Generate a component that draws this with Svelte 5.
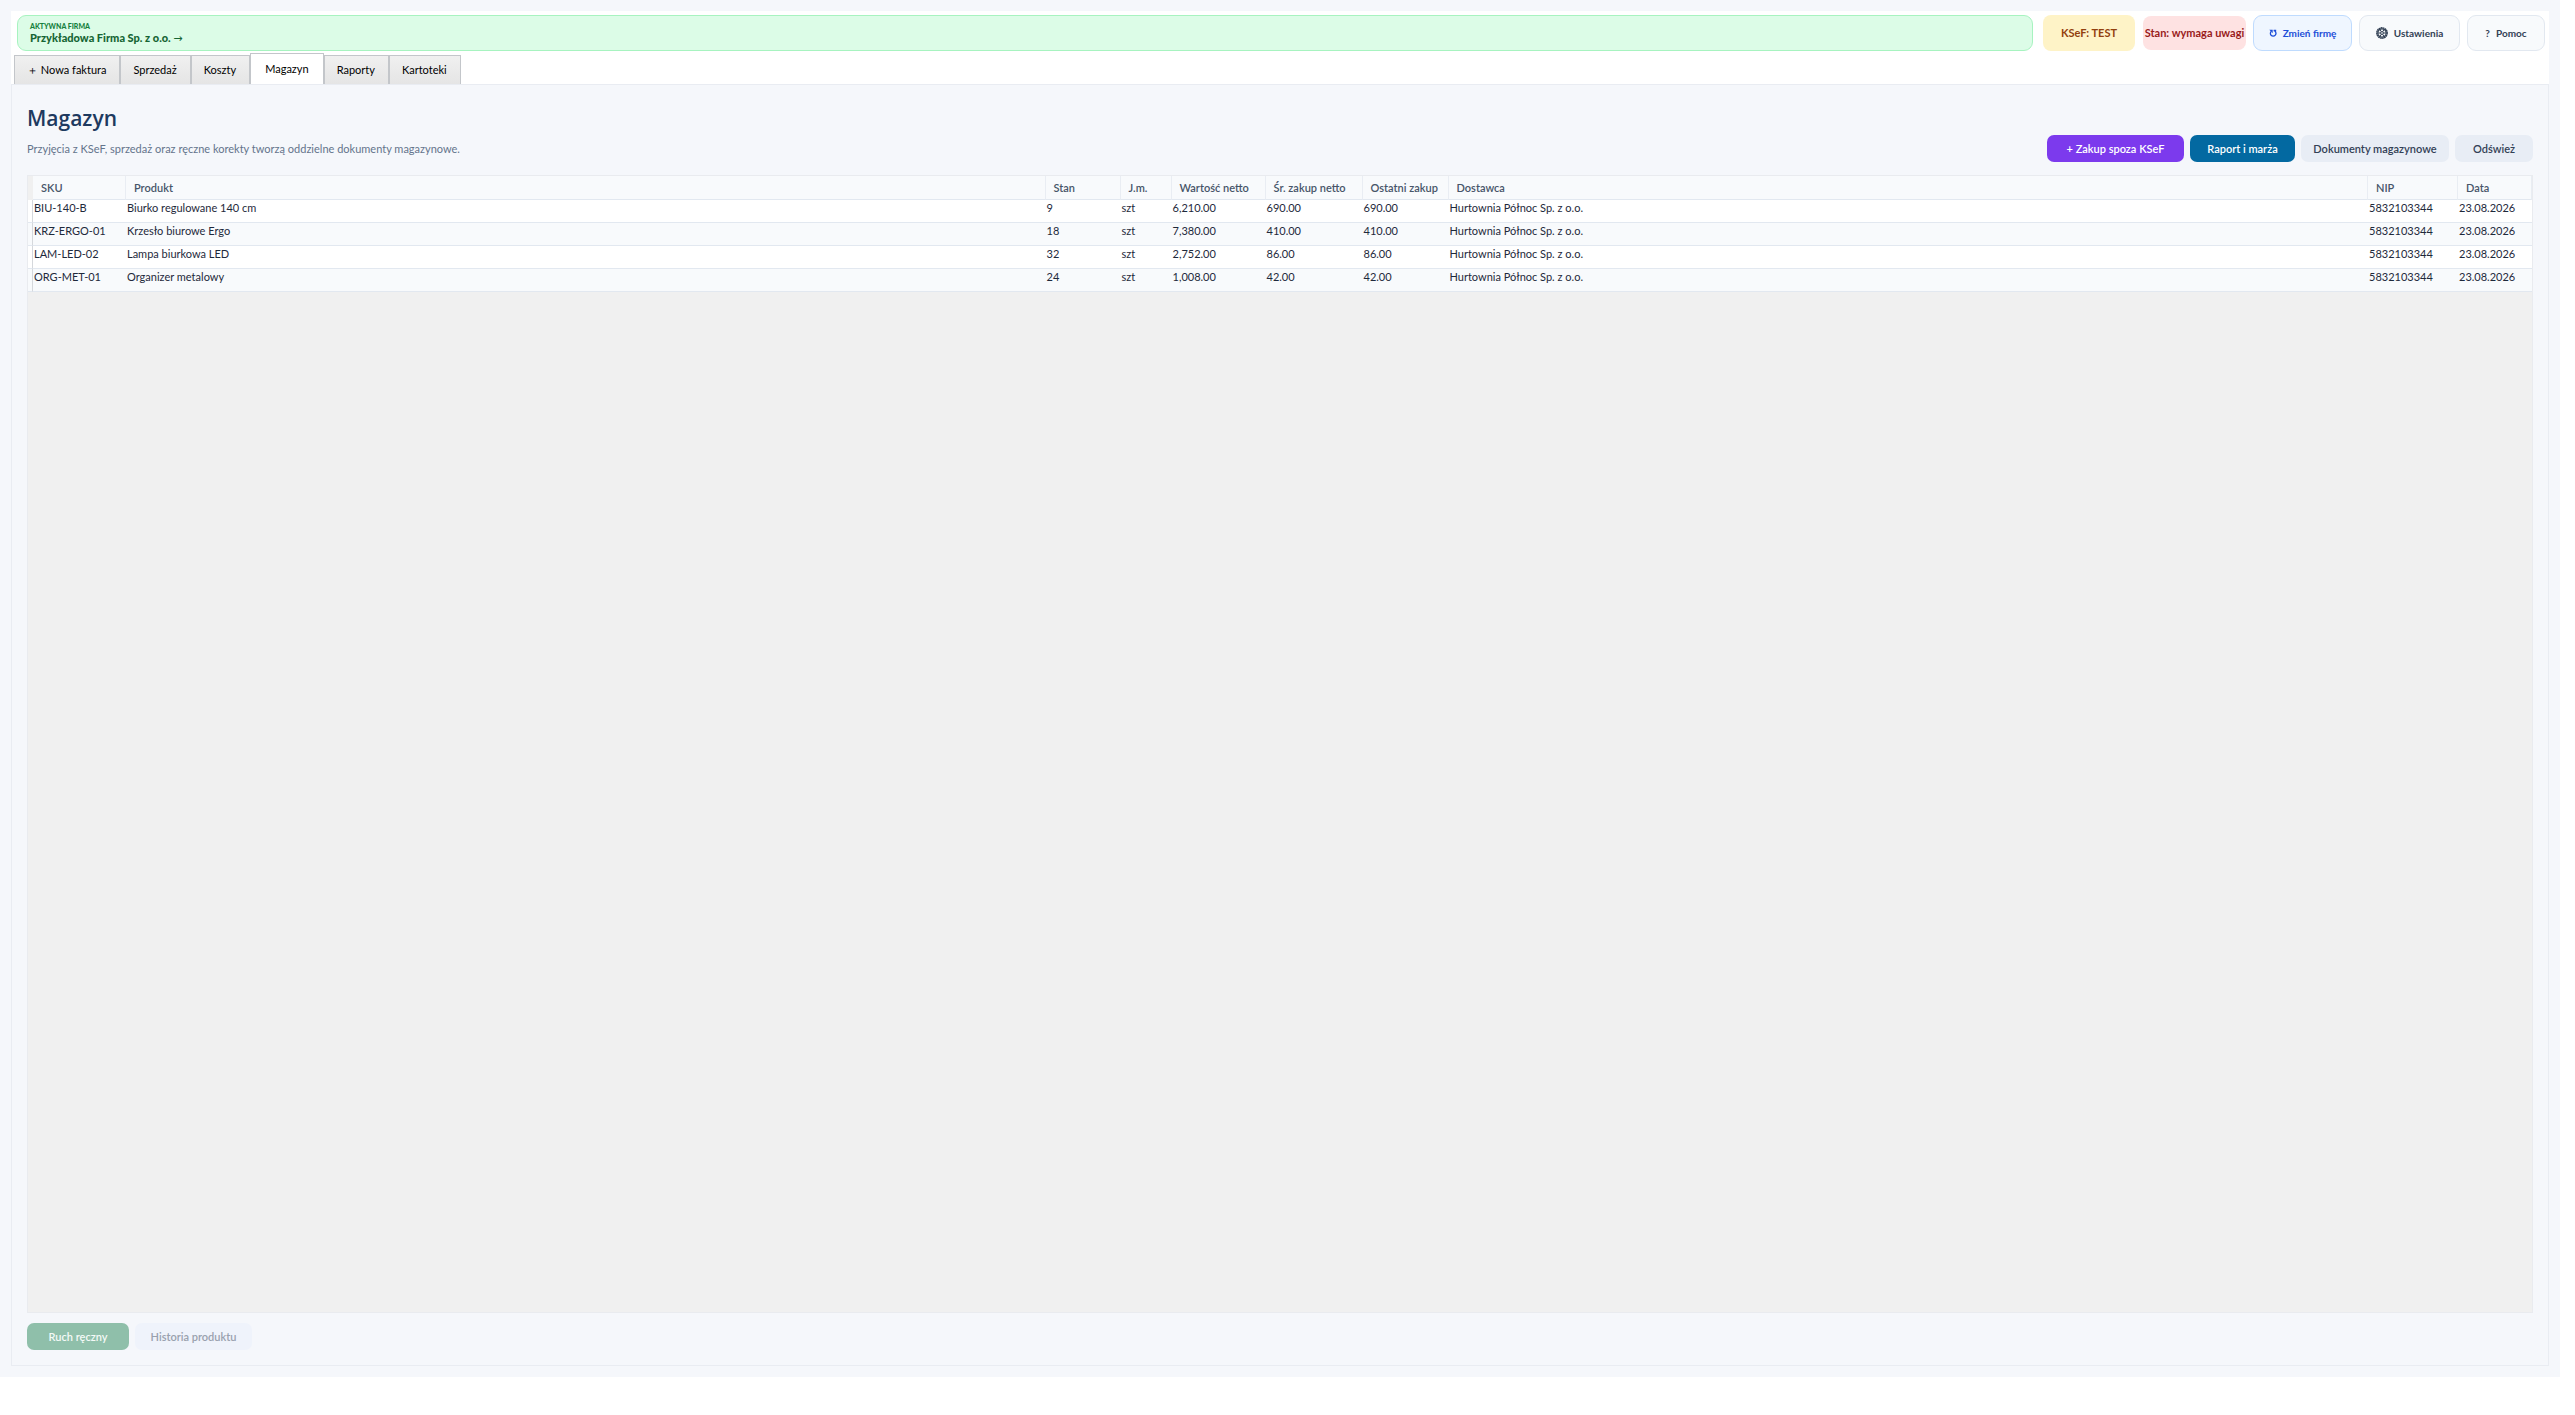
<script>
  const tabs = ['＋ Nowa faktura', 'Sprzedaż', 'Koszty', 'Magazyn', 'Raporty', 'Kartoteki'];
  let active = $state('Magazyn');

  const supplier = 'Hurtownia Północ Sp. z o.o.';
  const products = [
    { sku: 'BIU-140-B', name: 'Biurko regulowane 140 cm', stock: 9, value: '6,210.00', avg: '690.00', last: '690.00' },
    { sku: 'KRZ-ERGO-01', name: 'Krzesło biurowe Ergo', stock: 18, value: '7,380.00', avg: '410.00', last: '410.00' },
    { sku: 'LAM-LED-02', name: 'Lampa biurkowa LED', stock: 32, value: '2,752.00', avg: '86.00', last: '86.00' },
    { sku: 'ORG-MET-01', name: 'Organizer metalowy', stock: 24, value: '1,008.00', avg: '42.00', last: '42.00' }
  ];
</script>

<div class="window">
  <header>
    <div class="topbar">
      <button class="company">
        <small>AKTYWNA FIRMA</small>
        <strong>Przykładowa Firma Sp. z o.o. <span class="arrow">→</span></strong>
      </button>
      <span class="badge test">KSeF: TEST</span>
      <span class="badge state">Stan: wymaga uwagi</span>
      <button class="tool change">
        <svg width="8" height="8" viewBox="0 0 8 8" aria-hidden="true">
          <path d="M0.300 0.800h3.400v3.400z" fill="currentColor" />
          <path d="M2.200 2.600C1.200 3.500 1.100 5.200 2.100 6.200C3.200 7.300 5.100 7.300 6.200 6.200C7.200 5 7 3 5.600 1.700M4.600 1.500h2.600" fill="none" stroke="currentColor" stroke-width="1.300" />
        </svg>
        Zmień firmę
      </button>
      <button class="tool settings">
        <svg width="12" height="12" viewBox="0 0 12 12" aria-hidden="true">
          <circle cx="6" cy="6" r="5.200" fill="none" stroke="currentColor" stroke-width="1.400" stroke-dasharray="1.700 0.350" />
          <circle cx="6" cy="6" r="4.200" fill="none" stroke="currentColor" stroke-width="1.200" />
          <circle cx="6" cy="6" r="1.400" fill="none" stroke="currentColor" stroke-width="1" />
          <path d="M1.500 6h3M7.500 6h3M5.300 4.800L3.800 2.200M6.700 4.800l1.500-2.600M5.300 7.200l-1.500 2.600M6.700 7.200l1.500 2.600" stroke="currentColor" stroke-width="1" />
        </svg>
        Ustawienia
      </button>
      <button class="tool help"><span>?</span>Pomoc</button>
    </div>
    <nav>
      {#each tabs as tab}
        <button class:active={tab === active} onclick={() => (active = tab)}>{tab}</button>
      {/each}
    </nav>
  </header>

  <main>
    <h1>Magazyn</h1>
    <div class="intro">
      <p>Przyjęcia z KSeF, sprzedaż oraz ręczne korekty tworzą oddzielne dokumenty magazynowe.</p>
      <div class="actions">
        <button class="purchase">+ Zakup spoza KSeF</button>
        <button class="report">Raport i marża</button>
        <button class="documents">Dokumenty magazynowe</button>
        <button class="refresh">Odśwież</button>
      </div>
    </div>

    <div class="grid">
      <table>
        <colgroup>
          <col class="w-handle" /><col class="w-sku" /><col /><col class="w-stock" /><col class="w-unit" />
          <col class="w-value" /><col class="w-avg" /><col class="w-last" /><col /><col class="w-nip" /><col class="w-date" />
        </colgroup>
        <thead>
          <tr>
            <td class="handle"></td>
            <th>SKU</th>
            <th>Produkt</th>
            <th>Stan</th>
            <th>J.m.</th>
            <th>Wartość netto</th>
            <th>Śr. zakup netto</th>
            <th>Ostatni zakup</th>
            <th>Dostawca</th>
            <th>NIP</th>
            <th>Data</th>
          </tr>
        </thead>
        <tbody>
          {#each products as p}
            <tr>
              <td class="handle"></td>
              <td>{p.sku}</td>
              <td>{p.name}</td>
              <td>{p.stock}</td>
              <td>szt</td>
              <td>{p.value}</td>
              <td>{p.avg}</td>
              <td>{p.last}</td>
              <td>{supplier}</td>
              <td>5832103344</td>
              <td>23.08.2026</td>
            </tr>
          {/each}
        </tbody>
      </table>
    </div>

    <footer>
      <button class="move" disabled>Ruch ręczny</button>
      <button class="history" disabled>Historia produktu</button>
    </footer>
  </main>
</div>

<style>
  :global(body) {
    margin: 0;
    background: #fff;
  }

  .window {
    display: flex;
    flex-direction: column;
    box-sizing: border-box;
    min-height: calc(100vh - 38px);
    margin-right: 15px;
    padding: 11px;
    background: #f5f7fb;
    font-family: Lato, 'Open Sans', sans-serif;
    font-size: 11px;
    line-height: 16px;
    color: #1e293b;
  }

  button {
    font: inherit;
    margin: 0;
    padding: 0;
    border: 0;
    white-space: nowrap;
  }

  header {
    background: #fff;
  }

  .topbar {
    display: flex;
    gap: 7px;
    align-items: center;
    padding: 4px 4px 0 6px;
  }

  .company {
    flex: 1;
    display: flex;
    flex-direction: column;
    justify-content: center;
    box-sizing: border-box;
    height: 36px;
    margin-right: 3px;
    padding: 0 12px;
    border: 1px solid #a7f3c0;
    border-radius: 9px;
    background: #dcfce7;
    color: #166534;
    text-align: left;
  }

  .company small {
    font-size: 7px;
    line-height: 10px;
    font-weight: 900;
    color: #15803d;
  }

  .company strong {
    line-height: 14px;
    font-weight: 900;
  }

  .arrow {
    font-family: 'DejaVu Sans', sans-serif;
    font-weight: 400;
  }

  .badge {
    box-sizing: border-box;
    border-radius: 8px;
    font-weight: 700;
    line-height: 34px;
    text-align: center;
    white-space: nowrap;
  }

  .test {
    width: 92px;
    margin-right: 1px;
    padding: 1px 0;
    background: #fef3c7;
    color: #92400e;
  }

  .state {
    width: 103px;
    background: #fee2e2;
    color: #991b1b;
  }

  .tool {
    display: flex;
    gap: 6px;
    align-items: center;
    justify-content: center;
    box-sizing: border-box;
    height: 36px;
    border: 1px solid #e2e8f0;
    border-radius: 9px;
    background: #f8fafc;
    color: #334155;
    font-size: 10px;
    font-weight: 700;
  }

  .change {
    width: 99px;
    border-color: #bfdbfe;
    background: #eff6ff;
    color: #1d4ed8;
  }

  .settings {
    width: 101px;
  }

  .help {
    width: 78px;
  }

  nav {
    display: flex;
    align-items: flex-end;
    height: 33px;
    padding-left: 3px;
  }

  nav button {
    box-sizing: border-box;
    height: 29px;
    padding: 0 13px 0 12px;
    border: 1px solid #c3c6ca;
    border-bottom: 0;
    background: linear-gradient(#f0f0f0, #e5e5e5);
    color: #000;
  }

  nav button.active {
    height: 31px;
    padding: 0 14px;
    background: #fff;
  }

  main {
    flex: 1;
    display: flex;
    flex-direction: column;
    padding: 18px 15px 15px;
    border: 1px solid #e9ecf2;
  }

  h1 {
    margin: 0;
    font-family: 'Open Sans', sans-serif;
    font-size: 21px;
    line-height: 30px;
    font-weight: 600;
    color: #1e3a5f;
  }

  .intro {
    display: flex;
    align-items: center;
    justify-content: space-between;
    margin: 2px 0 13px;
  }

  p {
    margin: 0;
    color: #64748b;
  }

  .actions,
  footer {
    display: flex;
    gap: 6px;
  }

  .actions button,
  footer button {
    height: 27px;
    border-radius: 7px;
    font-weight: 600;
  }

  .purchase {
    width: 137px;
    background: #7c3aed;
    color: #fff;
  }

  .report {
    width: 105px;
    background: #0369a1;
    color: #fff;
  }

  .documents {
    width: 148px;
    background: #e8edf5;
    color: #334155;
  }

  .refresh {
    width: 78px;
    background: #e8edf5;
    color: #334155;
  }

  .grid {
    flex: 1;
    border: 1px solid #e9ebef;
    background: #f0f0f0;
  }

  table {
    width: 100%;
    table-layout: fixed;
    border-collapse: separate;
    border-spacing: 0;
  }

  .w-handle { width: 5px; }
  .w-sku { width: 93px; }
  .w-stock { width: 75px; }
  .w-unit { width: 51px; }
  .w-value { width: 94px; }
  .w-avg { width: 97px; }
  .w-last { width: 86px; }
  .w-nip { width: 90px; }
  .w-date { width: 74px; }

  th {
    height: 23px;
    padding: 0 0 0 8px;
    border-right: 1px solid #e9edf3;
    border-bottom: 1px solid #e2e8f0;
    background: #f8fafc;
    color: #475569;
    font-weight: 600;
    text-align: left;
    white-space: nowrap;
  }

  td {
    height: 22px;
    padding: 0 0 0 1px;
    border-bottom: 1px solid #e2e8f0;
    vertical-align: top;
    white-space: nowrap;
  }

  td.handle {
    padding: 0;
    border-right: 1px solid #d5d8dc;
  }

  thead td.handle {
    border-color: #f0f0f0;
  }

  tbody tr {
    background: #fff;
  }

  tbody tr:nth-child(even) {
    background: #f8fafc;
  }

  footer {
    margin-top: 10px;
  }

  .move {
    width: 102px;
    background: #8fbfaa;
    color: #f4faf7;
  }

  .history {
    width: 117px;
    background: #eff3fb;
    color: #99a1ae;
  }
</style>
